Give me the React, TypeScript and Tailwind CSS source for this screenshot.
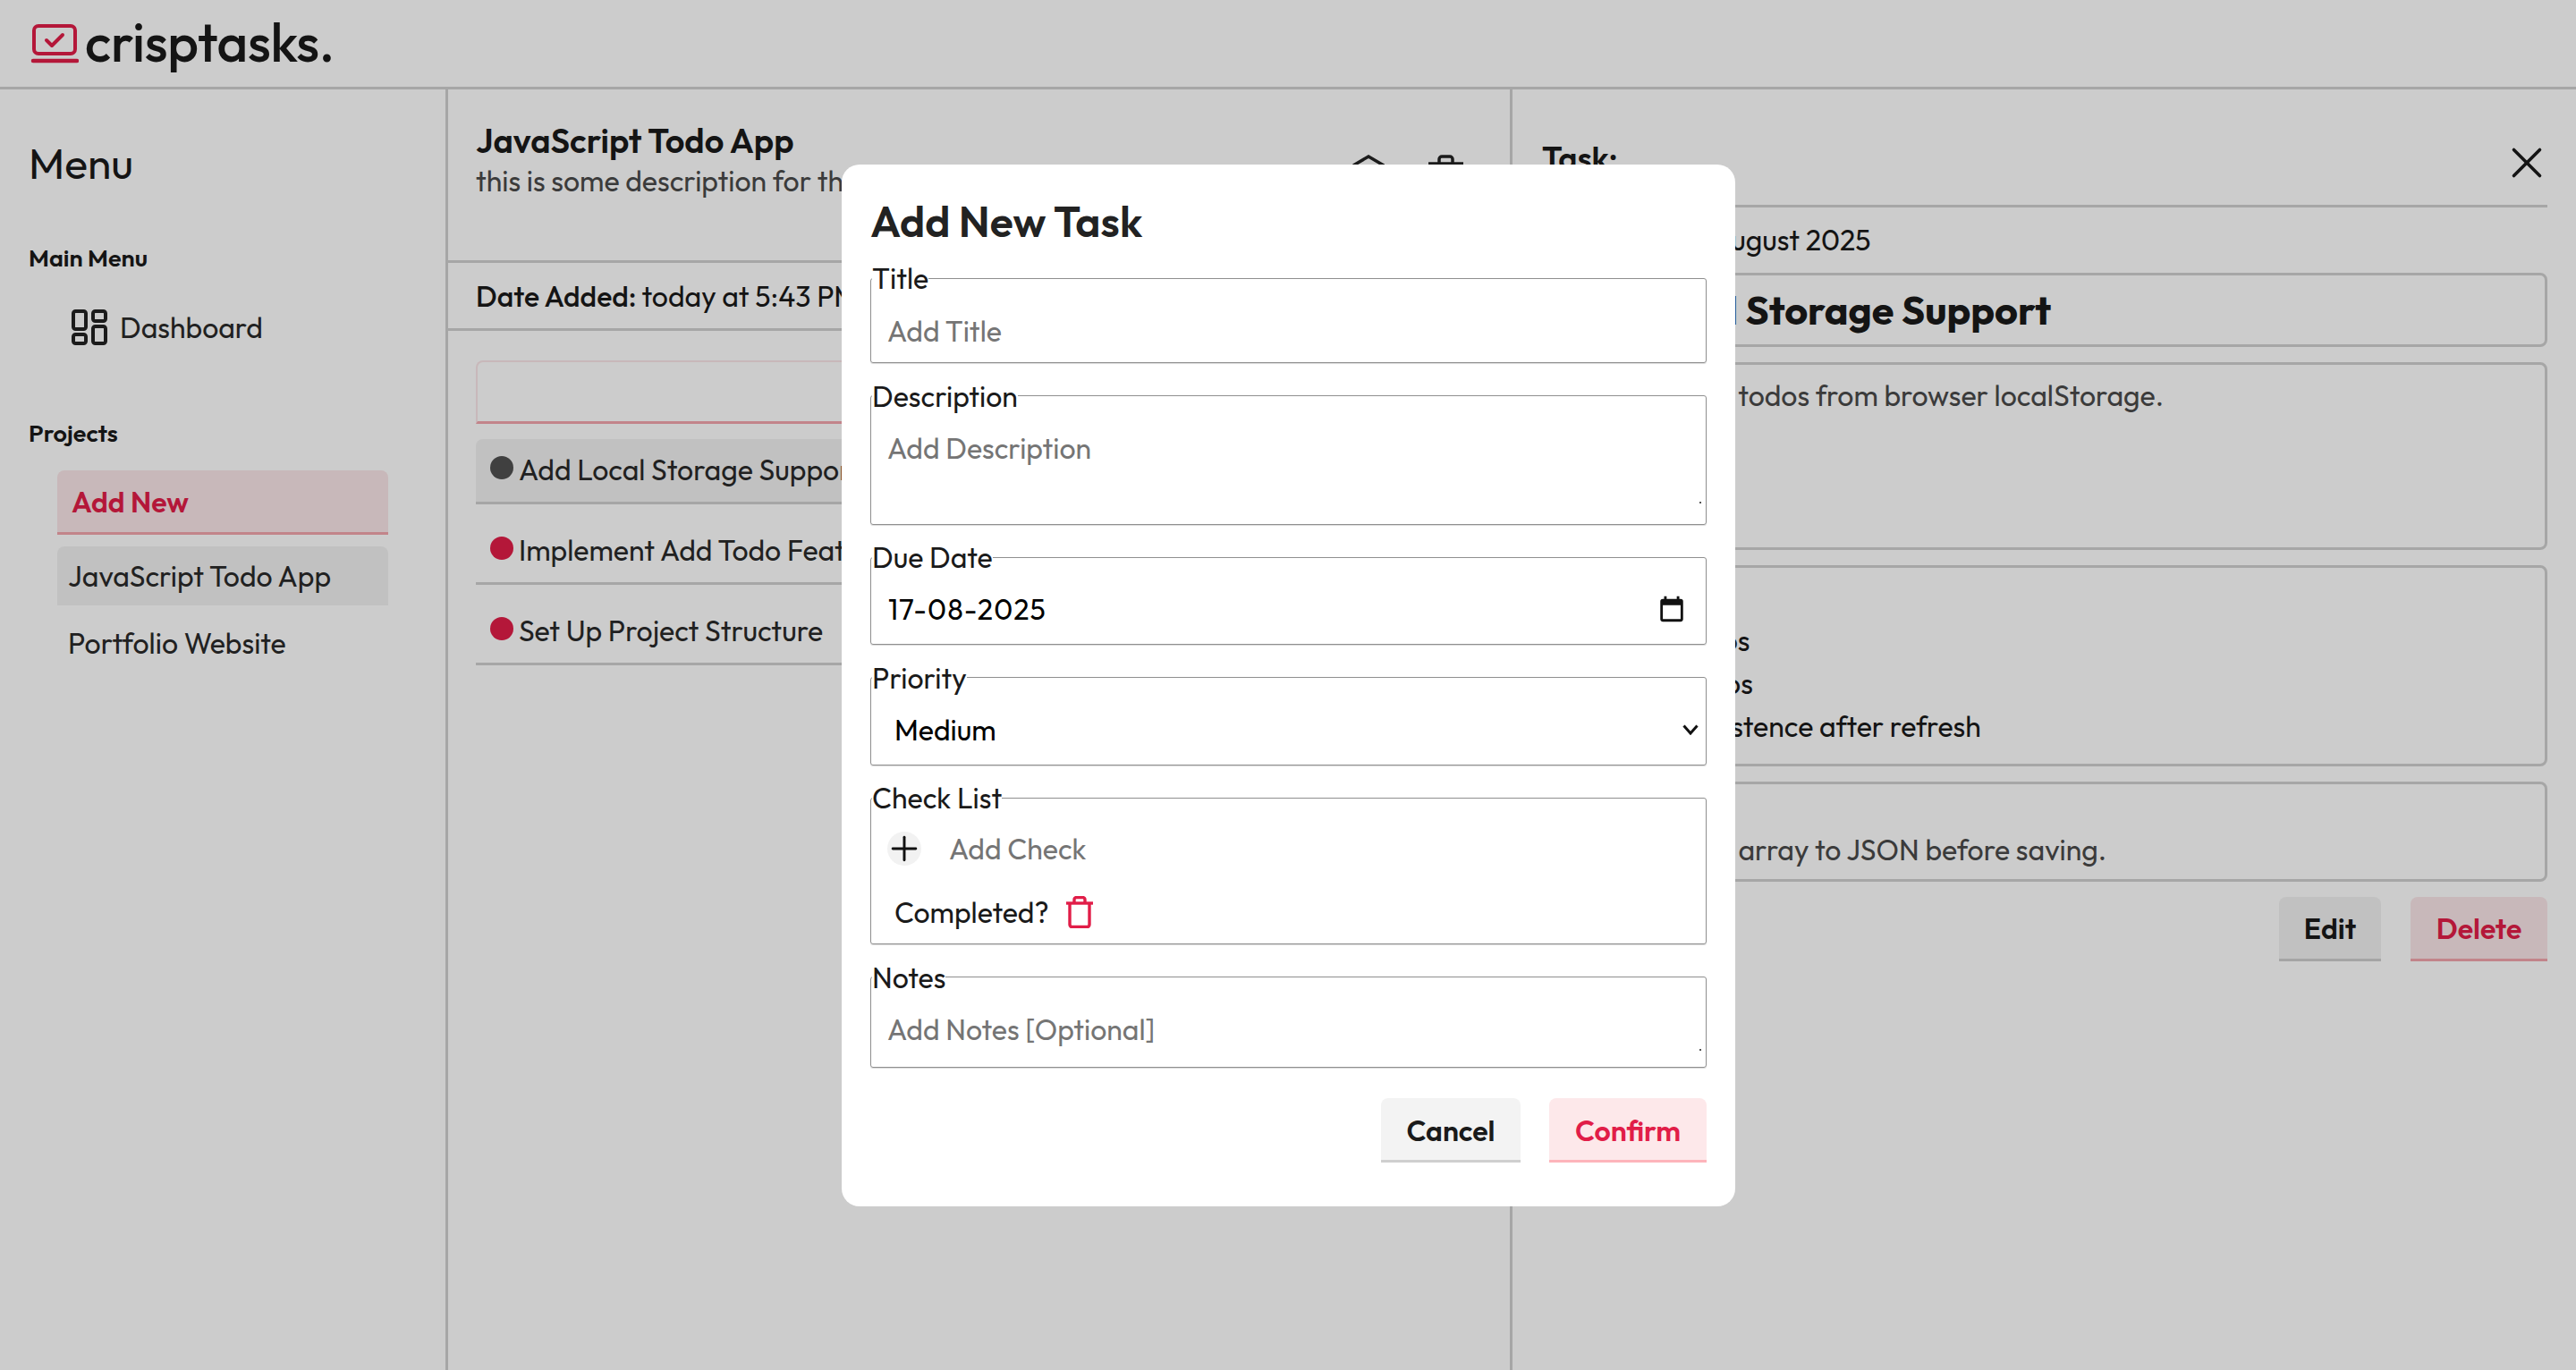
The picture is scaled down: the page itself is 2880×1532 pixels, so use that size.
import { X, Plus } from 'lucide-react';

const font = "font-['Outfit','Lato','Noto_Sans',sans-serif]";

function Fieldset({ label, className, children }: { label: string; className: string; children: React.ReactNode }) {
    return (
        <fieldset className={`relative border border-[#8f8f8f] rounded-[3px] shadow-[0_1px_1px_rgba(0,0,0,0.15)] min-w-0 ${className}`}>
            <legend className="text-[32px] leading-[40px] text-[#1a1a1a] ml-[1px] px-0">{label}</legend>
            {children}
        </fieldset>
    );
}

function LogoIcon() {
    return (
        <svg width="54" height="44" viewBox="0 0 54 44" fill="none" className="shrink-0">
            <rect x="4" y="2" width="46" height="31" rx="5" stroke="#e11d48" strokeWidth="4" />
            <path d="M18 18l6 6 12-12" stroke="#e11d48" strokeWidth="4" strokeLinecap="round" strokeLinejoin="round" />
            <path d="M3 41h49" stroke="#e11d48" strokeWidth="4.5" strokeLinecap="round" />
        </svg>
    );
}

function DashboardIcon() {
    return (
        <svg width="42" height="42" viewBox="0 0 42 42" fill="none" stroke="#222" strokeWidth="4" strokeLinejoin="round">
            <rect x="3" y="3" width="14" height="20" rx="2.5" />
            <rect x="25" y="3" width="14" height="11" rx="2.5" />
            <rect x="3" y="29" width="14" height="10" rx="2.5" />
            <rect x="25" y="20" width="14" height="19" rx="2.5" />
        </svg>
    );
}

function TaskRow({ color, name, active }: { color: string; name: string; active?: boolean }) {
    return (
        <div className={`h-[73px] flex items-center gap-[6px] pl-4 pb-[2px] border-b-[3px] border-[#d0d0d0] rounded-t-lg text-[32px] text-[#2a2a2a] whitespace-nowrap ${active ? 'bg-[#f2f2f2]' : ''}`}>
            <span className={`w-[26px] h-[26px] rounded-full shrink-0 -mt-[4px] ${color}`} />
            {name}
        </div>
    );
}

function DetailBox({ className, children }: { className: string; children?: React.ReactNode }) {
    return <div className={`border-[3px] border-[#d0d0d0] rounded-lg ${className}`}>{children}</div>;
}

function ResizeDot() {
    return <span className="absolute right-[5px] bottom-[12px] w-[2px] h-[2px] bg-[#555]" />;
}

export default function App() {
    return (
        <div className={`relative w-[2880px] h-[1532px] overflow-hidden bg-white text-[#1a1a1a] ${font}`}>
            <header className="h-[100px] flex items-center gap-[7px] pl-[34px] border-b-[3px] border-[#d0d0d0]">
                <LogoIcon />
                <span className="text-[60px] font-medium leading-none tracking-[-0.3px] -mt-[3px] text-[#1a1a1a]">crisptasks.</span>
            </header>

            <div className="flex h-[1432px]">
                <aside className="w-[501px] shrink-0 border-r-[3px] border-[#d0d0d0] pl-[32px] pr-[64px] pt-[52px]">
                    <h1 className="text-[48px] leading-[60px] font-normal">Menu</h1>
                    <h2 className="mt-[58px] text-[27px] font-semibold leading-[36px]">Main Menu</h2>
                    <div className="mt-[36px] ml-[47px] flex items-center gap-[13px] text-[32px] text-[#2a2a2a]">
                        <DashboardIcon />
                        Dashboard
                    </div>
                    <h2 className="mt-[76px] text-[27px] font-semibold leading-[36px]">Projects</h2>
                    <div className="mt-[24px] ml-[32px] flex flex-col">
                        <div className="h-[72px] flex items-center pl-4 rounded-t-lg bg-[#fbe7e9] border-b-[3px] border-[#f3a5ad] text-[32px] font-semibold text-[#e11d48]">Add New</div>
                        <div className="mt-[13px] h-[66px] flex items-center pl-3 rounded-t-lg bg-[#f2f2f2] text-[32px] text-[#2a2a2a]">JavaScript Todo App</div>
                        <div className="mt-[9px] h-[66px] flex items-center pl-3 text-[32px] text-[#2a2a2a]">Portfolio Website</div>
                    </div>
                </aside>

                <main className="w-[1190px] shrink-0 border-r-[3px] border-[#d0d0d0]">
                    <div className="h-[194px] pl-[31px] pr-[52px] pt-[33px] border-b-[3px] border-[#d0d0d0] flex justify-between">
                        <div className="min-w-0">
                            <h2 className="text-[38px] font-semibold leading-[48px]">JavaScript Todo App</h2>
                            <p className="text-[32px] leading-[42px] text-[#4a4a4a]">this is some description for the project</p>
                        </div>
                        <div className="flex gap-[49px] mt-[40px] shrink-0">
                            <svg width="36" height="40" viewBox="0 0 36 40" fill="none" stroke="#222" strokeWidth="3.5"><path d="M1 12L18 2l17 10v16" /></svg>
                            <svg width="39" height="40" viewBox="0 0 39 40" fill="none" stroke="#222" strokeWidth="3.5"><path d="M0 10h39M12 10V5a3 3 0 0 1 3-3h9a3 3 0 0 1 3 3v5" /></svg>
                        </div>
                    </div>
                    <div className="h-[76px] px-[31px] flex items-center border-b-[3px] border-[#d0d0d0] text-[32px] whitespace-nowrap">
                        <span className="font-medium mr-[6px]">Date Added:</span> today at 5:43 PM
                    </div>
                    <div className="pl-[31px] pr-[32px] pt-[33px] flex flex-col gap-[17px]">
                        <div className="h-[71px] rounded-t-lg border-2 border-b-[3px] border-[#fbe7e9] border-b-[#f3a5ad]" />
                        <TaskRow active color="bg-[#505050]" name="Add Local Storage Support" />
                        <TaskRow color="bg-[#e11d48]" name="Implement Add Todo Feature" />
                        <TaskRow color="bg-[#e11d48]" name="Set Up Project Structure" />
                    </div>
                </main>

                <section className="flex-1 min-w-0 pl-[33px] pr-[32px] pt-[50px]">
                    <div className="h-[82px] flex justify-between items-start border-b-[3px] border-[#d0d0d0]">
                        <span className="text-[36px] font-semibold">Task:</span>
                        <X size={58} strokeWidth={1.5} className="text-[#1a1a1a] mt-[3px] -mr-[6px]" />
                    </div>
                    <p className="mt-[16px] ml-[6px] text-[32px] leading-[40px]">Due Date: 17 August 2025</p>
                    <DetailBox className="mt-[17px] h-[83px] pl-[11px] flex items-center text-[45px] font-bold whitespace-nowrap">Add Local Storage Support</DetailBox>
                    <DetailBox className="mt-[17px] h-[210px] pl-[4px] pt-[10px] text-[32px] text-[#4a4a4a]">Load and save todos from browser localStorage.</DetailBox>
                    <DetailBox className="mt-[17px] h-[225px] pl-[74px] pt-[57px] text-[32px] leading-[48px]">
                        <p>Save todos</p>
                        <p>Load todos</p>
                        <p>Test persistence after refresh</p>
                    </DetailBox>
                    <DetailBox className="mt-[17px] h-[112px] pl-[42px] pt-[53px] text-[32px] leading-[40px] text-[#4a4a4a]">Convert the array to JSON before saving.</DetailBox>
                    <div className="mt-[17px] flex justify-end gap-[33px]">
                        <button className="w-[114px] h-[72px] rounded-t-lg bg-[#f2f2f2] border-b-[3px] border-[#cfcfcf] text-[32px] font-semibold">Edit</button>
                        <button className="w-[153px] h-[72px] rounded-t-lg bg-[#fbe7e9] border-b-[3px] border-[#f3a5ad] text-[32px] font-semibold text-[#e11d48]">Delete</button>
                    </div>
                </section>
            </div>

            {/* overlay */}
            <div className="absolute inset-0 bg-black/20" />

            <div className="absolute left-[941px] top-[184px] w-[999px] h-[1165px] bg-white rounded-[20px] px-[32px] pt-[33px]">
                <h2 className="text-[48px] font-semibold leading-[60px] text-[#222]">Add New Task</h2>
                <div className="mt-[14px] flex flex-col gap-[16.6px]">
                    <Fieldset label="Title" className="h-[115px]">
                        <input placeholder="Add Title" className="block w-full mt-[15px] pl-[18px] text-[32px] leading-[48px] h-[48px] outline-none placeholder:text-[#757575]" />
                    </Fieldset>
                    <Fieldset label="Description" className="h-[164px]">
                        <textarea placeholder="Add Description" className="block w-full h-[98px] mt-[14px] pl-[18px] text-[32px] leading-[48px] outline-none resize-none placeholder:text-[#757575]" />
                        <ResizeDot />
                    </Fieldset>
                    <Fieldset label="Due Date" className="h-[118px]">
                        <div className="pl-[19px] pr-[21px] flex justify-between items-center mt-[14px] text-[32px] leading-[48px] text-black tracking-[1.1px]">
                            17-08-2025
                            <svg width="34" height="34" viewBox="0 0 24 24" fill="#111"><path d="M19 4h-1V2h-2v2H8V2H6v2H5a2 2 0 0 0-2 2v14a2 2 0 0 0 2 2h14a2 2 0 0 0 2-2V6a2 2 0 0 0-2-2zm0 16H5V9h14v11z" /></svg>
                        </div>
                    </Fieldset>
                    <Fieldset label="Priority" className="h-[118px]">
                        <select defaultValue="Medium" className="block w-full h-[48px] mt-[14px] pl-[26px] text-[32px] text-black outline-none appearance-none">
                            <option>Low</option>
                            <option>Medium</option>
                            <option>High</option>
                        </select>
                        <svg width="18" height="12" viewBox="0 0 18 12" fill="none" stroke="#111" strokeWidth="3" className="absolute right-[8px] top-[32px] pointer-events-none"><path d="M1.5 1.5L9 10l7.5-8.5" /></svg>
                    </Fieldset>
                    <Fieldset label="Check List" className="h-[184px]">
                        <div className="mt-[17px] pl-[18px] flex items-center gap-[31px] text-[32px] leading-[40px] text-[#757575]">
                            <span className="w-[38px] h-[38px] rounded-full bg-[#f2f2f2] flex items-center justify-center text-[#111] overflow-hidden shrink-0"><Plus size={44} strokeWidth={1.6} className="shrink-0" /></span>
                            Add Check
                        </div>
                        <div className="mt-[31px] pl-[26px] flex items-center gap-[18px] text-[32px] leading-[40px] text-[#1a1a1a]">
                            Completed?
                            <svg width="32" height="36" viewBox="0 0 32 36" fill="none" stroke="#e11d48" strokeWidth="3.4" strokeLinejoin="round">
                                <path d="M1 8h30" />
                                <path d="M5 8v24a2.5 2.5 0 0 0 2.5 2.5h17A2.5 2.5 0 0 0 27 32V8" />
                                <path d="M10 8V4a2.5 2.5 0 0 1 2.5-2.5h7A2.5 2.5 0 0 1 22 4v4" />
                            </svg>
                        </div>
                    </Fieldset>
                    <Fieldset label="Notes" className="h-[121px]">
                        <textarea placeholder="Add Notes [Optional]" className="block w-full h-[60px] mt-[14px] pl-[18px] text-[32px] leading-[48px] outline-none resize-none placeholder:text-[#757575]" />
                        <ResizeDot />
                    </Fieldset>
                </div>
                <div className="mt-[34px] flex justify-end gap-[32px]">
                    <button className="w-[156px] h-[72px] pt-[4px] rounded-t-lg bg-[#f3f3f3] border-b-[3px] border-[#cfcfcf] text-[32px] font-semibold text-[#1a1a1a]">Cancel</button>
                    <button className="w-[176px] h-[72px] pt-[4px] rounded-t-lg bg-[#fde8ea] border-b-[3px] border-[#fdb4bb] text-[32px] font-semibold text-[#e11d48]">Confirm</button>
                </div>
            </div>
        </div>
    );
}
